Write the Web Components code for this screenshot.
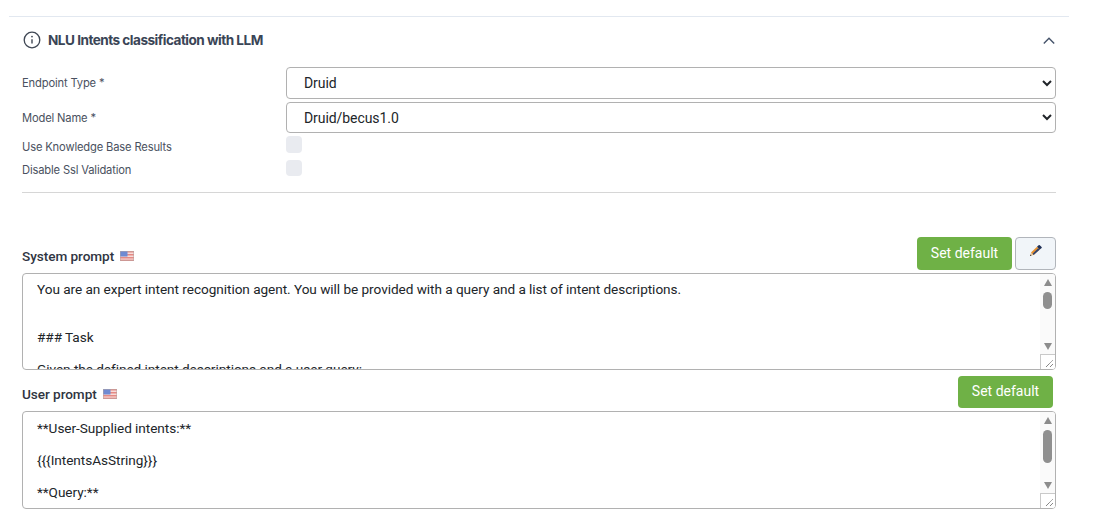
<!DOCTYPE html>
<html><head><meta charset="utf-8"><title>NLU</title>
<style>html,body{margin:0;padding:0;background:#fff}body{font-family:Roboto,sans-serif;width:1111px;height:529px;overflow:hidden}</style>
</head><body>
<nlu-panel></nlu-panel>
<script>
function def(name, css, html, init){
  customElements.define(name, class extends HTMLElement{
    constructor(){super();const r=this.attachShadow({mode:'open'});r.innerHTML='<style>'+css+'</style>'+html;}
    connectedCallback(){ if(init) init(this); }
  });
}
def('us-flag',':host{display:inline-flex;width:14px;height:10px}svg{display:block}',`<svg width="14" height="10" viewBox="0 0 14 10"><rect width="14" height="10" fill="#f6dcda"/><g fill="#e58a84"><rect y="0" width="14" height="1.5"/><rect y="3" width="14" height="1.5"/><rect y="6" width="14" height="1.5"/><rect y="8.6" width="14" height="1.4"/></g><rect width="7.5" height="5.5" fill="#6f8ad2"/><rect x=".25" y=".25" width="13.5" height="9.5" fill="none" stroke="#b5a5a4" stroke-width=".5"/></svg>`);
def('form-row',':host{display:flex;align-items:var(--al,center)}.l{width:264px;font:11.2px/14px Inter,sans-serif;color:#4a5160;letter-spacing:-.16px;flex:none;padding-top:var(--lp,0)}.c{flex:1;display:flex}',`<div class="l"></div><div class="c"><slot></slot></div>`,el=>{el.shadowRoot.querySelector('.l').textContent=el.getAttribute('label')});
def('select-field',`:host{display:block;flex:1}select{display:block;width:100%;box-sizing:border-box;height:var(--h,32px);border:1px solid #b1b1b1;border-radius:4px;background:#fff;color:#212529;font:14px Roboto,sans-serif;letter-spacing:-.07px;padding:0 13px;outline:none}`,`<select></select>`,el=>{const s=el.shadowRoot.querySelector('select');const o=document.createElement('option');o.textContent=el.getAttribute('value');s.append(o)});
def('check-box',':host{display:block;width:16px;height:var(--ch,17px);border-radius:4px;background:#e9ebf0}','');
def('action-button',`:host{display:inline-flex;align-items:center;justify-content:center;box-sizing:border-box;width:95px;height:33px;padding-bottom:2px;background:#6fb146;color:#fff;border-radius:4px;font:14px Roboto,sans-serif}`,'<slot></slot>');
def('edit-button',`:host{display:inline-flex;align-items:flex-start;justify-content:center;box-sizing:border-box;width:41px;height:33px;background:#f1f5f9;border:1px solid #b1b5bb;border-radius:4px;padding-top:7px}svg{display:block}`,`<svg width="12" height="11" viewBox="0 0 12 11"><path d="M0 11 L1 7.6 L3.6 10 Z" fill="#e9c79a"/><path d="M1 7.6 L7 1.8 L9.8 4.4 L3.6 10 Z" fill="#e8922e"/><path d="M2.6 8.8 L8.2 3.2 L9.8 4.4 L3.6 10 Z" fill="#2d4373"/><path d="M7 1.8 L8.6 .2 Q9.2 -.2 9.8 .2 L11.6 1.9 Q12 2.5 11.6 3 L9.8 4.4 Z" fill="#1f2f55"/><path d="M0 11 L.4 9.5 L1.6 10.6 Z" fill="#222"/></svg>`);
def('prompt-area',`:host{display:flex;box-sizing:border-box;height:var(--h,97px);border:1px solid #b1b1b1;border-radius:4px;overflow:hidden;background:#fff;position:relative}
.t{flex:1;padding:var(--pt,7px) 14px 0;font:13.6px/16px Roboto,sans-serif;letter-spacing:-.045px;color:#212529;overflow:hidden}
.sb{width:15px;flex:none;background:#fafafa;display:flex;flex-direction:column;align-items:center}
.up{width:0;height:0;border:4.5px solid transparent;border-top:0;border-bottom:7px solid #8c8c8c;margin-top:5px}
.th{width:9px;height:var(--th,17px);border-radius:5px;background:#8f8f8f;margin-top:var(--tm,6px)}
.dn{width:0;height:0;border:4.5px solid transparent;border-bottom:0;border-top:7px solid #8c8c8c;margin-top:auto;margin-bottom:19px}
.gr{position:absolute;right:0;bottom:0;width:15px;height:15px;background:#fff;border:1px solid #c9c9c9;border-right:0;border-bottom:0;box-sizing:border-box}
svg{position:absolute;right:1px;bottom:1px}`,
`<div class="t"><slot></slot></div><div class="sb"><div class="up"></div><div class="th"></div><div class="dn"></div></div><div class="gr"></div><svg width="9" height="9" viewBox="0 0 9 9"><path d="M1 8 L8 1 M5 8 L8 5" stroke="#555" stroke-width="1" stroke-dasharray="1 .6" fill="none"/></svg>`);
def('prompt-line',`:host{display:block;min-height:16px;margin:0}`,'<slot></slot>');
def('prompt-head',`:host{display:flex;align-items:center;justify-content:space-between}
.l{display:flex;align-items:center;gap:6px;font:500 13.6px/16px Roboto,sans-serif;letter-spacing:-.06px;color:#2f3542;margin-top:var(--lm,5px)}.r{display:flex;gap:3px}`,`<div class="l"><span id="x"></span><us-flag></us-flag></div><div class="r"><slot></slot></div>`,el=>{el.shadowRoot.getElementById('x').textContent=el.getAttribute('label')});
def('nlu-panel',`:host{display:block;box-sizing:border-box;width:1060px;margin:16px 0 0 9px;border-top:1px solid #e2e8f0;padding:0 13px}
.head{display:flex;align-items:center;gap:7px;height:46px;font:700 13.6px/16px Inter,sans-serif;color:#3a4556;letter-spacing:-.52px;padding-left:1px}
.head .chev{margin-left:auto;margin-right:1px}
.head svg{display:block}
.form{display:flex;flex-direction:column;margin-top:4px}
hr{border:0;border-top:1px solid #d6d6d6;margin:15px 0 0}
.sys{margin-top:44px}.sys-ta{margin-top:3px}
.usr{margin-top:6px}
`,`<div class="head"><svg width="18" height="18" viewBox="0 0 18 18" fill="none" stroke="#3f4754" stroke-width="1.3"><circle cx="9" cy="9" r="7.8"/><path d="M9 8.2V12.6" stroke-width="1.4"/><circle cx="9" cy="5.6" r=".9" fill="#3f4754" stroke="none"/></svg><span>NLU Intents classification with LLM</span><svg class="chev" width="12" height="7" viewBox="0 0 12 7" fill="none" stroke="#45536a" stroke-width="1.4"><path d="M.8 6.4 L6 1.2 L11.2 6.4"/></svg></div>
<div class="form">
<form-row label="Endpoint Type *"><select-field value="Druid"></select-field></form-row>
<form-row label="Model Name *" style="margin-top:3px"><select-field value="Druid/becus1.0" style="--h:31px"></select-field></form-row>
<form-row label="Use Knowledge Base Results" style="margin-top:3px;--lp:4px;--al:flex-start"><check-box></check-box></form-row>
<form-row label="Disable Ssl Validation" style="margin-top:6px;--lp:3px;--al:flex-start;--ch:16px"><check-box></check-box></form-row>
</div><hr>
<prompt-head class="sys" label="System prompt"><action-button>Set default</action-button><edit-button></edit-button></prompt-head>
<prompt-area class="sys-ta"><prompt-line>You are an expert intent recognition agent. You will be provided with a query and a list of intent descriptions.</prompt-line><prompt-line></prompt-line><prompt-line></prompt-line><prompt-line>### Task</prompt-line><prompt-line></prompt-line><prompt-line>Given the defined intent descriptions and a user query:</prompt-line></prompt-area>
<prompt-head class="usr" label="User prompt" style="--lm:4px"><action-button style="height:32px;margin-right:3px">Set default</action-button></prompt-head>
<prompt-area class="sys-ta" style="--h:98px;--th:33px;--pt:8px"><prompt-line>**User-Supplied intents:**</prompt-line><prompt-line></prompt-line><prompt-line>{{{IntentsAsString}}}</prompt-line><prompt-line></prompt-line><prompt-line>**Query:**</prompt-line></prompt-area>`);
</script>
</body></html>
